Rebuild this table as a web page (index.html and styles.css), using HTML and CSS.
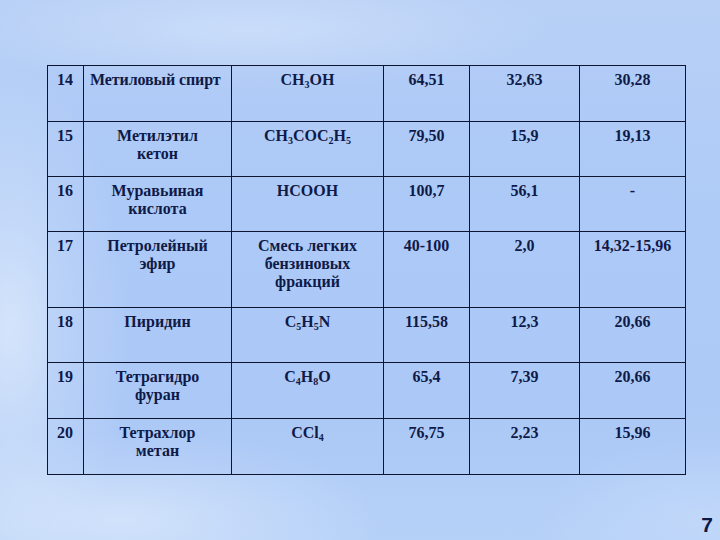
FILE: index.html
```html
<!DOCTYPE html>
<html lang="ru">
<head>
<meta charset="utf-8">
<link rel="stylesheet" href="styles.css">
</head>
<body>
<div class="slide">
  <table class="data">
    <colgroup>
      <col class="c1"><col class="c2"><col class="c3"><col class="c4"><col class="c5"><col class="c6">
    </colgroup>
    <tr class="r56">
      <td class="num">14</td>
      <td class="left">Метиловый спирт</td>
      <td>CH<sub>3</sub>OH</td>
      <td>64,51</td>
      <td>32,63</td>
      <td>30,28</td>
    </tr>
    <tr class="r55">
      <td class="num">15</td>
      <td>Метилэтил<br>кетон</td>
      <td>CH<sub>3</sub>COC<sub>2</sub>H<sub>5</sub></td>
      <td>79,50</td>
      <td>15,9</td>
      <td>19,13</td>
    </tr>
    <tr class="r55">
      <td class="num">16</td>
      <td>Муравьиная<br>кислота</td>
      <td>HCOOH</td>
      <td>100,7</td>
      <td>56,1</td>
      <td>-</td>
    </tr>
    <tr class="r76">
      <td class="num">17</td>
      <td>Петролейный<br>эфир</td>
      <td>Смесь легких<br>бензиновых<br>фракций</td>
      <td>40-100</td>
      <td>2,0</td>
      <td>14,32-15,96</td>
    </tr>
    <tr class="r55">
      <td class="num">18</td>
      <td>Пиридин</td>
      <td>C<sub>5</sub>H<sub>5</sub>N</td>
      <td>115,58</td>
      <td>12,3</td>
      <td>20,66</td>
    </tr>
    <tr class="r56">
      <td class="num">19</td>
      <td>Тетрагидро<br>фуран</td>
      <td>C<sub>4</sub>H<sub>8</sub>O</td>
      <td>65,4</td>
      <td>7,39</td>
      <td>20,66</td>
    </tr>
    <tr class="r56">
      <td class="num">20</td>
      <td>Тетрахлор<br>метан</td>
      <td>CCl<sub>4</sub></td>
      <td>76,75</td>
      <td>2,23</td>
      <td>15,96</td>
    </tr>
  </table>
  <div class="footer"><span class="page">7</span></div>
</div>
</body>
</html>
```
FILE: styles.css
```css
html, body {
  margin: 0;
  padding: 0;
}
body {
  width: 720px;
  height: 540px;
  overflow: hidden;
  background:
    radial-gradient(ellipse 120px 260px at 10px 330px, rgba(225,236,252,0.75), rgba(225,236,252,0) 100%),
    radial-gradient(ellipse 260px 90px at 120px 520px, rgba(222,234,252,0.7), rgba(222,234,252,0) 100%),
    radial-gradient(ellipse 300px 60px at 250px 30px, rgba(215,230,252,0.6), rgba(215,230,252,0) 100%),
    radial-gradient(ellipse 160px 80px at 700px 520px, rgba(200,220,250,0.6), rgba(200,220,250,0) 100%),
    linear-gradient(180deg, #b8d0f6 0%, #aecbf7 40%, #adcaf6 75%, #b6d1f8 100%);
  color: #101a48;
  font-family: "Liberation Serif", "Times New Roman", serif;
}
.slide {
  display: flex;
  flex-direction: column;
  padding: 65px 0 0 47px;
  height: 475px;
}
.data {
  border-collapse: collapse;
  table-layout: fixed;
  width: 639px;
  background: rgba(170,198,245,0.35);
}
.c1 { width: 36px; }
.c2 { width: 148px; }
.c3 { width: 152px; }
.c4 { width: 86px; }
.c5 { width: 110px; }
.c6 { width: 106px; }
.data td {
  font-family: "Liberation Serif", "Times New Roman", serif;
  font-weight: bold;
  font-size: 16px;
  line-height: 18px;
  color: #101a48;
  border: 1.5px solid #0e1530;
  vertical-align: top;
  text-align: center;
  padding: 5px 2px 0;
  white-space: nowrap;
}
.data td.num {
  text-align: left;
  padding-left: 9px;
}
.data td.left {
  text-align: left;
  padding-left: 6px;
  letter-spacing: -0.1px;
}
.r56 { height: 56px; }
.r55 { height: 55px; }
.r76 { height: 76px; }
.data sub {
  font-size: 10px;
  line-height: 0;
  vertical-align: -3px;
}
.footer {
  display: flex;
  justify-content: flex-end;
  margin-top: auto;
  padding: 0 7px 5px 0;
}
.page {
  font-family: "Liberation Sans", Arial, sans-serif;
  font-weight: bold;
  font-size: 21px;
  line-height: 21px;
  color: #0e1844;
}
```
